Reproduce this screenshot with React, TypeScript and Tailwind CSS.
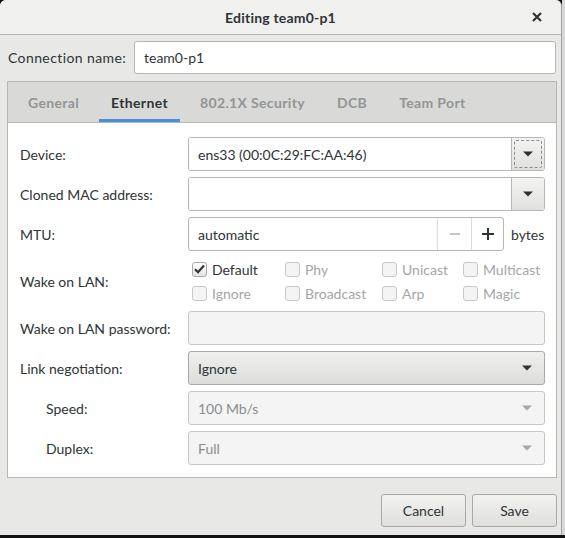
import React from "react";

const font = "font-['Lato','Noto_Sans',sans-serif]";

function Arrow({ disabled }: { disabled?: boolean }) {
  return (
    <svg width="10" height="6" viewBox="0 0 10 6" aria-hidden="true">
      <path d="M0 0.5h10L5 5.5z" fill={disabled ? "#a4a6a7" : "#2e3436"} />
    </svg>
  );
}

function Row({
  label,
  indent,
  children,
}: {
  label: string;
  indent?: boolean;
  children: React.ReactNode;
}) {
  return (
    <div className="flex items-center h-[34px]">
      <div className={`w-[168px] text-[14px] text-[#2e3436] ${indent ? "pl-[26px]" : ""}`}>
        {label}
      </div>
      <div className="flex-1 h-full">{children}</div>
    </div>
  );
}

function EntryCombo({ value, focused }: { value?: string; focused?: boolean }) {
  return (
    <div className="flex h-full rounded-[3px] border border-[#b6b6b3] overflow-hidden">
      <div className="flex-1 bg-white flex items-center pl-[9px] text-[14px] text-[#2e3436]">
        {value}
      </div>
      <div className="w-[33px] border-l border-[#b6b6b3] bg-gradient-to-b from-[#f4f4f3] to-[#e0e0de] flex items-center justify-center relative">
        {focused && (
          <div className="absolute inset-[2px] border border-dashed border-[#8a8a8a] rounded-[2px]" />
        )}
        <Arrow />
      </div>
    </div>
  );
}

function ButtonCombo({ value, disabled }: { value: string; disabled?: boolean }) {
  return (
    <div
      className={`flex items-center h-full rounded-[3px] border pl-[9px] pr-[12px] text-[14px] ${
        disabled
          ? "border-[#c7c7c5] bg-[#f4f4f4] text-[#8b8e8f]"
          : "border-[#a8a8a6] bg-gradient-to-b from-[#f0f0ef] to-[#dcdcda] text-[#2e3436]"
      }`}
    >
      <span className="flex-1">{value}</span>
      <Arrow disabled={disabled} />
    </div>
  );
}

function Check({ label, checked }: { label: string; checked?: boolean }) {
  return (
    <div className="flex items-center gap-[5px] h-[24px]">
      <div
        className={`w-[15px] h-[15px] rounded-[3px] border flex items-center justify-center ${
          checked
            ? "border-[#a8a8a6] bg-gradient-to-b from-white to-[#e4e4e2]"
            : "border-[#c7c7c5] bg-[#f4f4f4]"
        }`}
      >
        {checked && (
          <svg width="11" height="10" viewBox="0 0 11 10" aria-hidden="true">
            <path d="M1 5.2l3 3L10 1.5" stroke="#2e3436" strokeWidth="2.2" fill="none" />
          </svg>
        )}
      </div>
      <span className={`text-[14px] ${checked ? "text-[#2e3436]" : "text-[#a4a6a7]"}`}>
        {label}
      </span>
    </div>
  );
}

export default function App() {
  const tabs = ["General", "Ethernet", "802.1X Security", "DCB", "Team Port"];

  return (
    <div className={`w-[565px] h-[538px] bg-[#111] overflow-hidden ${font}`}>
      <div className="flex">
        <div className="w-[562px] h-[535px] flex flex-col bg-[#e8e8e7] rounded-t-[6px] border-r border-[#9f9f9f]">
          {/* Title bar */}
          <div className="h-[35px] shrink-0 flex items-center justify-center relative rounded-t-[6px] bg-[#f0f0ef] border-b border-[#b5b5b3]">
            <span className="text-[14px] font-bold text-[#2e3436] tracking-[0.2px]">
              Editing team0-p1
            </span>
            <svg
              className="absolute right-[19px] top-[12px]"
              width="10"
              height="10"
              viewBox="0 0 10 10"
              aria-hidden="true"
            >
              <path d="M1 1l8 8M9 1l-8 8" stroke="#2e3436" strokeWidth="2.2" />
            </svg>
          </div>

          {/* Connection name */}
          <div className="flex items-center pl-[8px] pr-[5px] pt-[6px]">
            <div className="w-[126px] text-[14px] text-[#2e3436] tracking-[0.4px]">
              Connection name:
            </div>
            <div className="flex-1 h-[33px] bg-white border border-[#b6b6b3] rounded-[3px] flex items-center pl-[9px] text-[14px] text-[#2e3436]">
              team0-p1
            </div>
          </div>

          {/* Notebook */}
          <div className="mt-[7px] mx-[7px] mr-[4px] border border-[#b6b6b3] flex flex-col">
            <div className="h-[41px] bg-[#d9d9d8] border-b border-[#b6b6b3] flex items-stretch pl-[8px] gap-[8px]">
              {tabs.map((t) => (
                <div
                  key={t}
                  className={`px-[12px] flex items-center pt-[3px] border-b-[3px] text-[14px] font-bold tracking-[0.35px] ${
                    t === "Ethernet"
                      ? "border-[#4a90d9] text-[#2e3436]"
                      : "border-transparent text-[#929595]"
                  }`}
                >
                  {t}
                </div>
              ))}
            </div>

            <div className="bg-white pl-[12px] pr-[11px] pt-[14px] pb-[12px] flex flex-col">
              <div className="flex flex-col gap-[6px]">
                <Row label="Device:">
                  <EntryCombo value="ens33 (00:0C:29:FC:AA:46)" focused />
                </Row>
                <Row label="Cloned MAC address:">
                  <EntryCombo />
                </Row>
                <Row label="MTU:">
                  <div className="flex h-full items-center">
                    <div className="flex h-full w-[316px] bg-white border border-[#b6b6b3] rounded-[3px]">
                      <div className="flex-1 flex items-center pl-[9px] text-[14px] text-[#2e3436]">
                        automatic
                      </div>
                      <div className="w-[34px] border-l border-[#dcdcdb] flex items-center justify-center">
                        <div className="w-[10px] h-[1.5px] bg-[#c4c5c6]" />
                      </div>
                      <div className="w-[32px] border-l border-[#dcdcdb] flex items-center justify-center">
                        <svg width="12" height="12" viewBox="0 0 12 12" aria-hidden="true">
                          <path d="M6 0v12M0 6h12" stroke="#2e3436" strokeWidth="2" />
                        </svg>
                      </div>
                    </div>
                    <span className="ml-[7px] text-[14px] text-[#2e3436]">bytes</span>
                  </div>
                </Row>
              </div>

              <div className="flex items-center h-[48px] mt-[6px]">
                <div className="w-[168px] text-[14px] text-[#2e3436]">Wake on LAN:</div>
                <div className="flex-1 grid grid-cols-[93px_97px_81px_1fr] pl-[4px]">
                  <Check label="Default" checked />
                  <Check label="Phy" />
                  <Check label="Unicast" />
                  <Check label="Multicast" />
                  <Check label="Ignore" />
                  <Check label="Broadcast" />
                  <Check label="Arp" />
                  <Check label="Magic" />
                </div>
              </div>

              <div className="flex flex-col gap-[6px] mt-[6px]">
                <Row label="Wake on LAN password:">
                  <div className="h-full bg-[#f4f4f4] border border-[#c7c7c5] rounded-[3px]" />
                </Row>
                <Row label="Link negotiation:">
                  <ButtonCombo value="Ignore" />
                </Row>
                <Row label="Speed:" indent>
                  <ButtonCombo value="100 Mb/s" disabled />
                </Row>
                <Row label="Duplex:" indent>
                  <ButtonCombo value="Full" disabled />
                </Row>
              </div>
            </div>
          </div>

          {/* Action area */}
          <div className="flex-1 flex items-start justify-end gap-[6px] pr-[4px] pt-[16px]">
            {["Cancel", "Save"].map((b) => (
              <div
                key={b}
                className="w-[85px] h-[33px] rounded-[3px] border border-[#a8a8a6] bg-gradient-to-b from-[#f2f2f1] to-[#dfdfdd] flex items-center justify-center text-[14px] text-[#2e3436]"
              >
                {b}
              </div>
            ))}
          </div>
        </div>
        <div className="w-[3px] h-[535px] bg-[#d8d8d8]" />
      </div>
    </div>
  );
}
